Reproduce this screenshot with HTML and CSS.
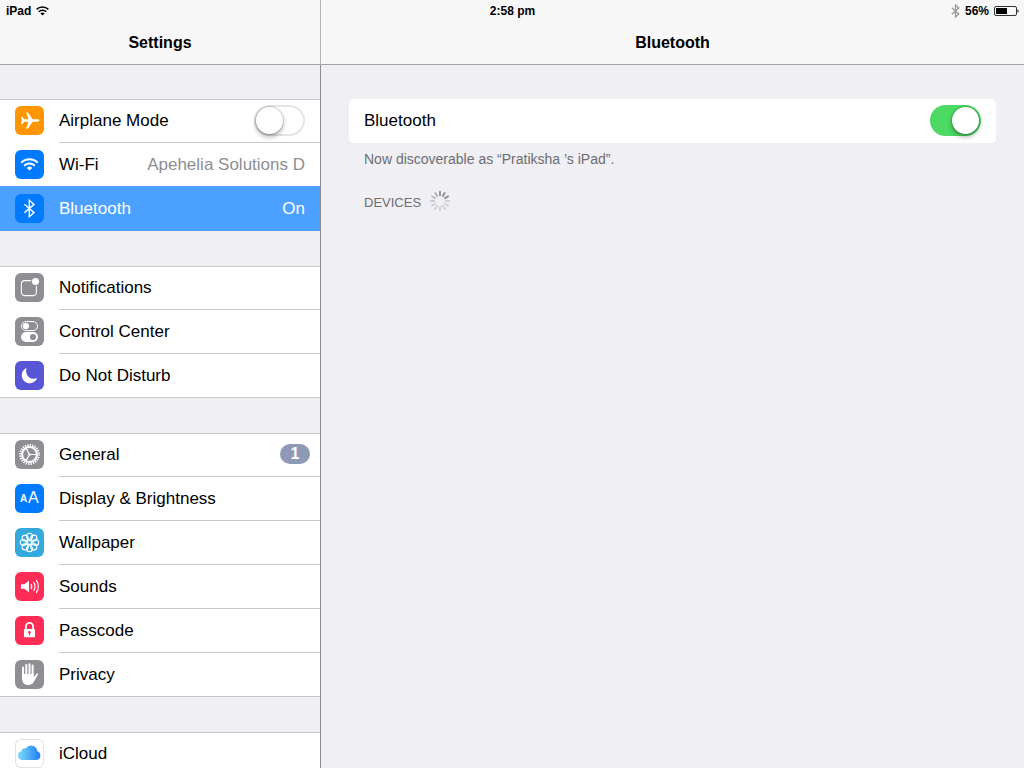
FILE: index.html
```html
<!DOCTYPE html>
<html lang="en">
<head>
  <meta charset="UTF-8">
  <meta name="viewport" content="width=device-width, initial-scale=1">
  <title>Settings</title>
  <link rel="stylesheet" href="styles.css">
</head>
<body>

  <!-- Status bar -->
  <div class="status-bar">
    <div class="status-left">
      <span>iPad</span>
      <svg width="13" height="10" viewBox="0 0 13 10" fill="none" stroke="#000" stroke-width="1.5">
        <path d="M0.6 3.4a8.4 8.4 0 0 1 11.8 0"/>
        <path d="M2.7 5.7a5.4 5.4 0 0 1 7.6 0"/>
        <path d="M6.5 9.6L4.4 7.5a3 3 0 0 1 4.2 0z" fill="#000" stroke="none"/>
      </svg>
    </div>
    <div class="status-time">2:58 pm</div>
    <div class="status-right">
      <svg width="9" height="14" viewBox="0 0 9 14" fill="none" stroke="#999" stroke-width="1.3">
        <path d="M0.8 3.8l7 6.3L4.5 13V1l3.3 2.9-7 6.3"/>
      </svg>
      <span>56%</span>
      <svg width="25" height="10" viewBox="0 0 25 10">
        <rect x="0.5" y="0.5" width="22" height="9" rx="1.5" fill="none" stroke="#333"/>
        <rect x="2" y="2" width="11" height="6" fill="#000"/>
        <path d="M23.5 3.2c1.4.4 1.4 3.2 0 3.6z" fill="#000"/>
      </svg>
    </div>
  </div>

  <div class="split-view">

    <!-- Sidebar -->
    <nav class="sidebar">
      <header class="nav-bar"><h1>Settings</h1></header>

      <div class="sidebar-scroll">
        <ul class="group">
          <li class="row">
            <svg class="icon orange" viewBox="0 0 29 29">
              <path fill="#fff" d="M24.3 14.5c0 .7-.9 1.2-2 1.2h-4.6l-4.8 6.8h-1.8l2.4-6.800H9.200l-1.700 2.400H6l.8-3.600-.8-3.600h1.500l1.700 2.400h4.300l-2.400-6.800h1.800l4.800 6.800h4.600c1.100 0 2 .5 2 1.200z"/>
            </svg>
            <div class="row-body">
              <label for="airplane">Airplane Mode</label>
              <input class="switch" type="checkbox" id="airplane">
            </div>
          </li>
          <li>
            <a class="row before-selected" href="#wifi">
              <svg class="icon blue" viewBox="0 0 29 29" fill="none" stroke="#fff" stroke-width="2">
                <path d="M6.2 12.6a12 12 0 0 1 16.6 0"/>
                <path d="M9.2 15.7a7.8 7.8 0 0 1 10.600 0"/>
                <path d="M14.5 20.6l-2.7-2.7a3.8 3.8 0 0 1 5.4 0z" fill="#fff" stroke="none"/>
              </svg>
              <span class="row-body">Wi-Fi <span class="value">Apehelia Solutions D</span></span>
            </a>
          </li>
          <li>
            <a class="row selected" href="#bluetooth">
              <svg class="icon blue" viewBox="0 0 29 29" fill="none" stroke="#fff" stroke-width="1.4">
                <path d="M9.4 10.2l9.6 8.4-4.7 4.2V6.2l4.7 4.2-9.6 8.4"/>
              </svg>
              <span class="row-body">Bluetooth <span class="value">On</span></span>
            </a>
          </li>
        </ul>

        <ul class="group">
          <li>
            <a class="row" href="#notifications">
              <svg class="icon gray" viewBox="0 0 29 29">
                <path fill="none" stroke="#fff" stroke-width="1.1" d="M16.2 7.6H9.4a3 3 0 0 0-3 3v9a3 3 0 0 0 3 3h9a3 3 0 0 0 3-3v-6.8"/>
                <circle cx="20.5" cy="8.5" r="3.5" fill="#fff"/>
              </svg>
              <span class="row-body">Notifications</span>
            </a>
          </li>
          <li>
            <a class="row" href="#control-center">
              <svg class="icon gray" viewBox="0 0 29 29">
                <rect x="6.5" y="4.6" width="16" height="9" rx="4.5" fill="none" stroke="#fff"/>
                <circle cx="11" cy="9.1" r="3.1" fill="#fff"/>
                <rect x="6" y="15" width="17" height="10" rx="5" fill="#fff"/>
                <circle cx="18" cy="20" r="3.1" fill="#8e8e93"/>
              </svg>
              <span class="row-body">Control Center</span>
            </a>
          </li>
          <li>
            <a class="row" href="#do-not-disturb">
              <svg class="icon purple" viewBox="0 0 29 29">
                <path fill="#fff" d="M11.600 6.900a8 8 0 1 0 10.600 10.200c-2.600 1.300-6.200 1-8.500-1.200-2.500-2.300-3.200-6-2.100-9z"/>
              </svg>
              <span class="row-body">Do Not Disturb</span>
            </a>
          </li>
        </ul>

        <ul class="group">
          <li>
            <a class="row" href="#general">
              <svg class="icon gray" viewBox="0 0 29 29" fill="none" stroke="#fff">
                <circle cx="14.5" cy="14.5" r="9.300" stroke-width="2.400" stroke-dasharray="1.260 1.175"/>
                <circle cx="14.5" cy="14.5" r="7.400" stroke-width="2"/>
                <path stroke-width="1.2" d="M14.5 14.5h7M14.5 14.5L11 8.4M14.5 14.5L11 20.6"/>
                <circle cx="14.5" cy="14.5" r="1.2" fill="#fff" stroke="none"/>
              </svg>
              <span class="row-body">General <span class="badge">1</span></span>
            </a>
          </li>
          <li>
            <a class="row" href="#display">
              <svg class="icon blue" viewBox="0 0 29 29" fill="#fff" aria-hidden="true">
                <text class="small-a" x="5" y="18">A</text>
                <text class="big-a" x="13" y="19">A</text>
              </svg>
              <span class="row-body">Display &amp; Brightness</span>
            </a>
          </li>
          <li>
            <a class="row" href="#wallpaper">
              <svg class="icon cyan" viewBox="0 0 29 29" fill="none" stroke="#fff" stroke-width="1.1">
                <circle cx="14.5" cy="8.300" r="3"/>
                <circle cx="18.900" cy="10.100" r="3"/>
                <circle cx="20.700" cy="14.5" r="3"/>
                <circle cx="18.900" cy="18.900" r="3"/>
                <circle cx="14.5" cy="20.700" r="3"/>
                <circle cx="10.100" cy="18.900" r="3"/>
                <circle cx="8.300" cy="14.5" r="3"/>
                <circle cx="10.100" cy="10.100" r="3"/>
                <circle cx="14.5" cy="14.5" r="2"/>
              </svg>
              <span class="row-body">Wallpaper</span>
            </a>
          </li>
          <li>
            <a class="row" href="#sounds">
              <svg class="icon pink" viewBox="0 0 29 29" fill="none" stroke="#fff" stroke-width="1.2">
                <path fill="#fff" stroke="none" d="M6 12.2h3.3L14 8.8v11.4l-4.7-3.4H6z"/>
                <path d="M16 12a4.5 4.5 0 0 1 0 5"/>
                <path d="M18.6 10.2a7.4 7.4 0 0 1 0 8.6"/>
                <path d="M21.2 8.2a10.6 10.6 0 0 1 0 12.6"/>
              </svg>
              <span class="row-body">Sounds</span>
            </a>
          </li>
          <li>
            <a class="row" href="#passcode">
              <svg class="icon pink" viewBox="0 0 29 29">
                <path fill="none" stroke="#fff" stroke-width="1.8" d="M10.9 13.5v-3a3.6 3.6 0 0 1 7.2 0v3"/>
                <rect x="9" y="13" width="11" height="8.2" rx="0.6" fill="#fff"/>
                <circle cx="14.5" cy="16.2" r="1.3" fill="#ff2d55"/>
                <path stroke="#ff2d55" d="M14.5 16v3.2"/>
              </svg>
              <span class="row-body">Passcode</span>
            </a>
          </li>
          <li>
            <a class="row" href="#privacy">
              <svg class="icon gray" viewBox="0 0 29 29">
                <g fill="none" stroke="#fff" stroke-width="2" stroke-linecap="round">
                  <path d="M8.1 7.5v9M11.3 4.9v10M14.5 4.2v10M17.6 5.4v11"/>
                </g>
                <path fill="#fff" d="M7.1 14h11.5v3.500l2.500-3.300c.6-.9 1.700-.8 2.200-.3l-4.100 7.400c-1.300 2.500-3.100 3.800-5.900 3.800-4.200 0-6.200-2.700-6.200-6.600z"/>
              </svg>
              <span class="row-body">Privacy</span>
            </a>
          </li>
        </ul>

        <ul class="group">
          <li>
            <a class="row" href="#icloud">
              <svg class="icon white" viewBox="0 0 29 29">
                <defs>
                  <linearGradient id="cloud" x1="0" y1="0" x2="1" y2="0">
                    <stop offset="0" stop-color="#7fdcfc"/>
                    <stop offset="1" stop-color="#1d7df2"/>
                  </linearGradient>
                </defs>
                <path fill="url(#cloud)" d="M7.2 21a4.4 4.4 0 0 1-.8-8.7 3.7 3.7 0 0 1 4.3-2.9 6.3 6.3 0 0 1 11.600 2.9A4.5 4.5 0 0 1 21.7 21z"/>
              </svg>
              <span class="row-body">iCloud</span>
            </a>
          </li>
        </ul>
      </div>
    </nav>

    <!-- Bluetooth details -->
    <main class="detail">
      <header class="nav-bar"><h2>Bluetooth</h2></header>

      <div class="detail-content">
        <div class="card">
          <label for="bluetooth">Bluetooth</label>
          <input class="switch" type="checkbox" id="bluetooth" checked>
        </div>
        <p class="note">Now discoverable as “Pratiksha ’s iPad”.</p>
        <div class="devices">
          <h3>DEVICES</h3>
          <svg width="20" height="20" viewBox="-10 -10 20 20" stroke="#6d6d72" stroke-width="1.8">
            <path d="M0-5v-5" opacity=".75"/>
            <path d="M0-5v-5" opacity=".8" transform="rotate(30)"/>
            <path d="M0-5v-5" opacity=".8" transform="rotate(60)"/>
            <path d="M0-5v-5" opacity=".25" transform="rotate(90)"/>
            <path d="M0-5v-5" opacity=".25" transform="rotate(120)"/>
            <path d="M0-5v-5" opacity=".25" transform="rotate(150)"/>
            <path d="M0-5v-5" opacity=".25" transform="rotate(180)"/>
            <path d="M0-5v-5" opacity=".25" transform="rotate(210)"/>
            <path d="M0-5v-5" opacity=".25" transform="rotate(240)"/>
            <path d="M0-5v-5" opacity=".3" transform="rotate(270)"/>
            <path d="M0-5v-5" opacity=".4" transform="rotate(300)"/>
            <path d="M0-5v-5" opacity=".5" transform="rotate(330)"/>
          </svg>
        </div>
      </div>
    </main>

  </div>

</body>
</html>
```
FILE: styles.css
```css
* {
  box-sizing: border-box;
}

body {
  margin: 0;
  font-family: "Liberation Sans", Arial, sans-serif;
  font-size: 17px;
  line-height: 20px;
  color: #000;
  background: #efeff4;
}

h1, h2, h3, p, ul {
  margin: 0;
  padding: 0;
}

ul {
  list-style: none;
}

svg {
  display: block;
  flex-shrink: 0;
}

/* Status bar, lies over both nav bars */
.status-bar {
  position: absolute;
  top: 0;
  left: 0;
  right: 0;
  z-index: 1;
  display: grid;
  grid-template-columns: 1fr auto 1fr;
  align-items: center;
  height: 21px;
  padding: 0 5px 0 6px;
  font-size: 12px;
  font-weight: bold;
}

.status-left,
.status-right {
  display: flex;
  align-items: center;
  gap: 5px;
}

.status-right {
  justify-content: flex-end;
}

/* Layout */
.split-view {
  display: grid;
  grid-template-columns: 321px 1fr;
  height: 100vh;
  overflow: hidden;
}

.sidebar,
.detail {
  display: flex;
  flex-direction: column;
  min-width: 0;
  min-height: 0;
}

.nav-bar {
  flex-shrink: 0;
  height: 65px;
  padding-top: 33px;
  text-align: center;
  background: #f7f7f7;
  border-bottom: 1px solid #a1a1a8;
}

.nav-bar h1,
.nav-bar h2 {
  font-size: 16px;
  line-height: 20px;
}

.sidebar .nav-bar {
  border-right: 1px solid #b4b4b8;
}

.sidebar-scroll {
  flex: 1;
  padding-top: 34px;
  overflow-y: auto;
  scrollbar-width: none;
  border-right: 1px solid #8c8c92;
}

/* Rows */
.group {
  margin-bottom: 35px;
  background: #fff;
}

.row {
  display: flex;
  align-items: center;
  gap: 15px;
  height: 44px;
  padding-left: 15px;
  color: #000;
  text-decoration: none;
}

.row-body {
  flex: 1;
  display: flex;
  align-items: center;
  justify-content: space-between;
  height: 100%;
  padding-right: 15px;
  border-bottom: 1px solid #c8c7cc;
}

.group li:first-child {
  box-shadow: inset 0 1px #c8c7cc;
}

.group li:last-child {
  box-shadow: inset 0 -1px #c8c7cc;
}

.group li:only-child {
  box-shadow: inset 0 1px #c8c7cc, inset 0 -1px #c8c7cc;
}

.value {
  color: #8e8e93;
}

.row.selected {
  color: #fff;
  background: #4ca0ff;
  box-shadow: 0 -1px #4ca0ff;
}

.row.selected .value {
  color: #fff;
}

.row.selected .row-body,
.row.before-selected .row-body {
  border-color: transparent;
}

.badge {
  width: 30px;
  margin: 0 -5px 1px 0;
  border-radius: 10px;
  font-size: 16px;
  font-weight: bold;
  text-align: center;
  color: #fff;
  background: #8e9ab5;
}

/* Icons */
.icon {
  width: 29px;
  height: 29px;
  margin-bottom: 1px;
  border-radius: 6px;
}

.orange { background: #ff9500; }
.blue { background: #007aff; }
.gray { background: #8e8e93; }
.purple { background: #5856d6; }
.cyan { background: #34aadc; }
.pink { background: #ff2d55; }
.white {
  background: #fff;
  box-shadow: inset 0 0 0 1px #e2e2e4;
}

.small-a {
  font-size: 10px;
  font-weight: bold;
}

.big-a {
  font-size: 16px;
}

/* Switch */
.switch {
  appearance: none;
  display: flex;
  width: 51px;
  height: 31px;
  margin: 0;
  padding: 2px;
  border-radius: 16px;
  background: #fff;
  box-shadow: inset 0 0 0 2px #e5e5e5;
  cursor: pointer;
}

.switch::before {
  content: "";
  width: 27px;
  height: 27px;
  border-radius: 50%;
  background: #fff;
  box-shadow: 0 0 1px 1px rgba(0, 0, 0, 0.15), 0 3px 5px rgba(0, 0, 0, 0.3);
}

.switch:checked {
  justify-content: flex-end;
  background: #4cd964;
  box-shadow: none;
}

/* Detail pane */
.detail-content {
  padding: 34px 28px;
}

.card {
  display: flex;
  align-items: center;
  justify-content: space-between;
  height: 44px;
  padding: 0 15px 1px;
  border-radius: 5px;
  background: #fff;
}

.note,
.devices {
  padding-left: 15px;
  font-size: 13px;
  color: #6d6d72;
}

.note {
  margin-top: 6px;
  font-size: 14px;
}

.devices {
  display: flex;
  gap: 9px;
  margin-top: 22px;
}

.devices h3 {
  padding-top: 2px;
  font-size: 13px;
  font-weight: normal;
}
```
